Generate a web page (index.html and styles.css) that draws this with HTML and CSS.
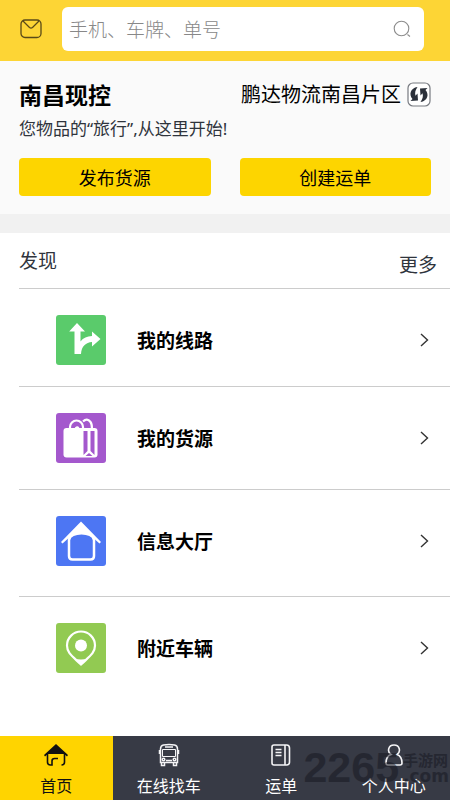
FILE: index.html
```html
<!DOCTYPE html>
<html lang="zh-CN">
<head>
<meta charset="utf-8">
<meta name="viewport" content="width=device-width, initial-scale=1">
<title>首页</title>
<link rel="stylesheet" href="styles.css">
</head>
<body>
<header class="topbar">
  <button class="icon-button" type="button" aria-label="消息">
    <svg width="22" height="20" viewBox="0 0 22 20" fill="none" stroke="#5a4a18" stroke-width="1.3"><rect x="1" y="1" width="20" height="17.500" rx="4"/><path d="M3 2l6.500 6.500q1.500 1.200 3 0L19 2"/></svg>
  </button>
  <form class="search" role="search">
    <input class="search-input" type="search" aria-label="搜索" placeholder="手机、车牌、单号">
    <button class="icon-button" type="submit" aria-label="搜索">
      <svg width="18" height="18" viewBox="0 0 18 18" fill="none" stroke="#8c8c8c" stroke-width="1.100"><circle cx="8.500" cy="8.500" r="7.300"/><path d="M14.500 14.500l2.500 2"/></svg>
    </button>
  </form>
</header>

<main class="content">
  <section class="intro">
    <div class="intro-head">
      <h1 class="title">南昌现控</h1>
      <div class="region">
        <span>鹏达物流南昌片区</span>
        <button class="icon-button" type="button" aria-label="切换片区">
          <svg width="24" height="25" viewBox="0 0 24 25"><rect x="1" y="1" width="22" height="23" rx="5" fill="#fff" stroke="#777a80" stroke-width="1.200"/><g fill="#2b303a"><path d="M10.500 5C3.500 6 1.500 12.500 5.500 17L3.500 19l7.500-.500-.500-7-2 2.200C7.500 10.500 8.500 8 10.500 5z"/><path d="M13.500 20c7-1 9-7.500 5-12L20.500 6l-7.500.500.500 7 2-2.200c1 3.200 0 5.700-2 8.700z"/></g></svg>
        </button>
      </div>
    </div>
    <p class="slogan">您物品的“旅行”,从这里开始!</p>
    <div class="actions">
      <button class="action" type="button">发布货源</button>
      <button class="action" type="button">创建运单</button>
    </div>
  </section>

  <section class="discover">
    <div class="discover-head">
      <h2 class="discover-title">发现</h2>
      <a class="more" href="#">更多</a>
    </div>
    <ul class="list">
      <li class="item"><a class="item-link" href="#">
        <svg class="tile" viewBox="0 0 50 50"><rect width="50" height="50" rx="3" fill="#5acb6b"/><path d="M18.500 39V16.500h-5.300L21 8l8 8.500h-4.500v10C27.500 22.500 31 21.500 36 21v-4.500l8.500 7.500-8.500 7.500V27c-6 .500-10.500 4-11 12z" fill="#fff"/></svg>
        <span class="label">我的线路</span>
        <svg class="chevron" viewBox="0 0 9 14"><path d="M1 1l6.500 6L1 13"/></svg>
      </a></li>
      <li class="item"><a class="item-link" href="#">
        <svg class="tile" viewBox="0 0 50 50"><rect width="50" height="50" rx="3" fill="#a458cd"/><path d="M14 17v-3a6.500 6.500 0 0 1 13 0v3M20 17v-2q2-2 3 2M27 8.500q4-4 7.500.500 1.500 2 1.500 7" fill="none" stroke="#fff" stroke-width="2.200"/><rect x="7.500" y="15" width="34" height="29.500" rx="3" fill="#fff"/><path d="M27.500 18h4v20l-4 4zM34.500 18h4v24l-4-4zM33 40l3.500 3h-7z" fill="#a458cd"/></svg>
        <span class="label">我的货源</span>
        <svg class="chevron" viewBox="0 0 9 14"><path d="M1 1l6.500 6L1 13"/></svg>
      </a></li>
      <li class="item"><a class="item-link" href="#">
        <svg class="tile" viewBox="0 0 50 50"><rect width="50" height="50" rx="3" fill="#4d76f3"/><path d="M25 5.500L45 26l-1.500 1.500L35 20H15l-8.500 7.500L5 26z" fill="#fff"/><path d="M13 24v16q0 3.500 3.500 3.500h18q3.500 0 3.500-3.500V24c-1-9-24-9-25 0z" fill="#4d76f3" stroke="#fff" stroke-width="2.500"/></svg>
        <span class="label">信息大厅</span>
        <svg class="chevron" viewBox="0 0 9 14"><path d="M1 1l6.500 6L1 13"/></svg>
      </a></li>
      <li class="item"><a class="item-link" href="#">
        <svg class="tile" viewBox="0 0 50 50"><rect width="50" height="50" rx="3" fill="#92ca52"/><path d="M25 8.500A14 14 0 0 0 11 22.500C11 30 16 33 25 41.500 34 33 39 30 39 22.500A14 14 0 0 0 25 8.500z" fill="none" stroke="#fff" stroke-width="2.200"/><path d="M18.500 35.500q6.500 2 13 0L25 42z" fill="#fff"/><circle cx="25" cy="22.500" r="6" fill="#fff"/></svg>
        <span class="label">附近车辆</span>
        <svg class="chevron" viewBox="0 0 9 14"><path d="M1 1l6.500 6L1 13"/></svg>
      </a></li>
    </ul>
  </section>
</main>

<nav class="tabs">
  <a class="tab tab-active" href="#" aria-current="page">
    <svg class="tab-icon" viewBox="0 0 26 24"><path d="M13 1l12 11-1 1.500-3-2.500H5l-3 2.500L1 12z" fill="#111"/><path d="M4.500 11v8q0 3 3 3h1.500v-4q0-2.500 2.500-2.500h3.500M21.500 11v8q0 3-3 3" fill="none" stroke="#111" stroke-width="1.600"/></svg>
    <span>首页</span>
  </a>
  <a class="tab" href="#">
    <svg class="tab-icon" viewBox="0 0 26 24" fill="none" stroke="#f4f4f6" stroke-width="1.500"><path d="M4.500 19.500V6q0-3.500 3-4 5.500-1 11 0 3 .500 3 4v13.500zM9 4h8M5.500 20v2.500h3V20M17.500 20v2.500h3V20M10 17.500h6M3.500 7v4M22.500 7v4"/><path d="M6.500 6.500h13v7h-13z" stroke-width="1"/><circle cx="7.500" cy="16.500" r="1.300"/><circle cx="18.500" cy="16.500" r="1.300"/></svg>
    <span>在线找车</span>
  </a>
  <a class="tab" href="#">
    <svg class="tab-icon" viewBox="0 0 26 24" fill="none" stroke="#f4f4f6" stroke-width="1.600"><path d="M6 2h11v20H6q-2 0-2-2V4q0-2 2-2zM17 2h1.500q3 0 3 3v14q0 3-3 3H17M7.500 6.500h6M7.500 9.500h6M7.500 12.500h6"/></svg>
    <span>运单</span>
  </a>
  <a class="tab" href="#">
    <svg class="tab-icon" viewBox="0 0 26 24" fill="none" stroke="#f4f4f6" stroke-width="1.600"><path d="M10 11.500C6 9 7 2 13 2s7 7 3 9.500c4 1.500 5 5 5 8.500q0 2-2 2H7q-2 0-2-2c0-3.500 1-7 5-8.500z"/></svg>
    <span>个人中心</span>
  </a>
  <div class="watermark">
    <span class="mark-number">2265</span>
    <span class="mark-side"><span class="mark-name">手游网</span><span class="mark-domain">.com</span></span>
  </div>
</nav>
</body>
</html>
```
FILE: styles.css
```css
* {
  box-sizing: border-box;
}

body {
  margin: 0;
  min-height: 100vh;
  display: flex;
  flex-direction: column;
  background: #fff;
  color: #000;
  font-family: "Noto Sans CJK SC", sans-serif;
  font-size: 19px;
  line-height: 28px;
}

h1, h2, p, ul {
  margin: 0;
  padding: 0;
}

a {
  color: inherit;
  text-decoration: none;
}

button {
  padding: 0;
  border: 0;
  font: inherit;
  color: inherit;
  cursor: pointer;
}

svg {
  display: block;
  flex: none;
}

.icon-button {
  flex: none;
  background: none;
}

.topbar {
  display: flex;
  align-items: center;
  gap: 20px;
  padding: 7px 26px 10px 20px;
  background: #fdd535;
}

.search {
  flex: 1;
  min-width: 0;
  display: flex;
  align-items: center;
  padding: 0 13px 0 7px;
  height: 44px;
  border-radius: 6px;
  background: #fff;
}

.search-input {
  flex: 1;
  min-width: 0;
  padding: 0;
  border: 0;
  outline: 0;
  background: none;
  font: inherit;
}

.search-input::placeholder {
  color: #888;
  font-weight: 300;
}

.content {
  flex: 1;
}

.intro {
  padding: 17px 19px 18px;
  background: #fafafa;
  border-bottom: 19px solid #f1f1f1;
}

.intro-head {
  display: flex;
  justify-content: space-between;
  align-items: center;
  height: 32px;
}

.title {
  font-size: 23px;
  font-weight: 700;
}

.region {
  display: flex;
  align-items: center;
  gap: 6px;
  font-size: 20px;
}

.slogan {
  margin: 5px 0 15px;
  color: #2f343c;
  font-family: "Noto Sans", "Noto Sans CJK SC", sans-serif;
  font-size: 17px;
}

.actions {
  display: grid;
  grid-template-columns: 1fr 1fr;
  gap: 29px;
}

.action {
  height: 38px;
  border-radius: 4px;
  background: #fdd500;
  font-size: 18px;
}

.discover-head {
  display: flex;
  justify-content: space-between;
  height: 56px;
  margin-left: 19px;
  padding: 13px 13px 0 0;
  border-bottom: 1px solid #ccc;
  color: #2f343c;
}

.discover-title {
  font-size: 19px;
  font-weight: 400;
}

.more {
  padding-top: 4px;
}

.list {
  display: grid;
  grid-template-rows: 98px 103px 107px 103px;
  margin-left: 19px;
  list-style: none;
}

.item {
  border-bottom: 1px solid #ccc;
}

.item:last-child {
  border-bottom: 0;
}

.item-link {
  display: flex;
  align-items: center;
  padding: 26px 21px 0 37px;
}

.tile {
  width: 50px;
  height: 50px;
}

.label {
  flex: 1;
  margin-left: 31px;
  font-weight: 700;
}

.chevron {
  width: 9px;
  height: 14px;
  fill: none;
  stroke: #333;
  stroke-width: 1.4;
}

.tabs {
  position: relative;
  display: grid;
  grid-template-columns: repeat(4, 1fr);
  background: #373a45;
  color: #fff;
  font-size: 16px;
  line-height: 24px;
}

.tab {
  display: flex;
  flex-direction: column;
  align-items: center;
  gap: 6px;
  padding: 7px 0 3px;
}

.tab-active {
  background: #ffd400;
  color: #111;
}

.tab-icon {
  width: 26px;
  height: 24px;
}

.watermark {
  position: absolute;
  right: 1px;
  top: 13px;
  display: flex;
  align-items: center;
  gap: 4px;
  color: #14151f;
  opacity: 0.5;
  font-weight: 700;
  pointer-events: none;
}

.mark-number {
  font: 700 43px/36px "Liberation Sans", sans-serif;
}

.mark-side {
  display: flex;
  flex-direction: column;
}

.mark-name {
  font-size: 15px;
  line-height: 18px;
}

.mark-domain {
  font: 700 17px/14px "DejaVu Sans", sans-serif;
}
```
